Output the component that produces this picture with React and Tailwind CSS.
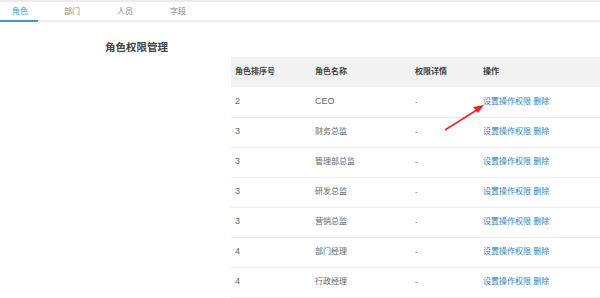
const tabs = ["角色", "部门", "人员", "字段"];

const roles = [
  { sort: 2, name: "CEO" },
  { sort: 3, name: "财务总监" },
  { sort: 3, name: "管理部总监" },
  { sort: 3, name: "研发总监" },
  { sort: 3, name: "营销总监" },
  { sort: 4, name: "部门经理" },
  { sort: 4, name: "行政经理" },
];

const App = () => {
  return (
    <div
      className="w-[600px] h-[298px] overflow-hidden bg-white text-[#555]"
      style={{ fontFamily: '"Liberation Sans", "Noto Sans CJK SC", sans-serif' }}
    >
      <div className="h-[2px] bg-[#ececec]" />

      {/* tabs */}
      <div className="flex h-[20px] border-b-2 border-[#eeeeee]">
        {tabs.map((t, i) => (
          <div
            key={t}
            className={
              i === 0
                ? "w-[38px] -mb-[2px] border-b-2 border-[#3a9ad9] text-[#3a9ad9] text-[8px] leading-[20px] pl-[12px]"
                : "w-[53px] text-[8px] leading-[20px] text-[#888] pl-[26px]"
            }
          >
            {t}
          </div>
        ))}
      </div>

      <div className="pl-[105px] pt-[15px]">
        <h1 className="text-[10.5px] font-bold text-[#444] leading-[20px]">角色权限管理</h1>
      </div>

      {/* table */}
      <div className="relative pl-[231px]">
        <table className="w-[369px] text-[8px] border-collapse">
          <thead>
            <tr className="h-[30px] bg-[#f2f2f2] text-[#3f3f3f]">
              <th className="w-[80px] text-left pl-[4px] font-bold">角色排序号</th>
              <th className="w-[100px] text-left pl-[4px] font-bold">角色名称</th>
              <th className="w-[68px] text-left pl-[4px] font-bold">权限详情</th>
              <th className="text-left pl-[4px] font-bold">操作</th>
            </tr>
          </thead>
          <tbody>
            {roles.map((r, i) => (
              <tr key={i} className="h-[30px] border-b border-[#ededed] text-[#666]">
                <td className="pl-[4px] text-[9px]">{r.sort}</td>
                <td className="pl-[4px]">
                  <span className={r.name === "CEO" ? "text-[9px]" : ""}>{r.name}</span>
                </td>
                <td className="pl-[4px]">-</td>
                <td className="pl-[4px] text-[#2f7fc1]">
                  设置操作权限 <span>删除</span>
                </td>
              </tr>
            ))}
          </tbody>
        </table>

        {/* red annotation arrow */}
        <svg
          className="absolute left-[440px] top-[40px]"
          width="50"
          height="40"
          viewBox="0 0 50 40"
        >
          <line x1="5" y1="33" x2="40" y2="11" stroke="#e8251f" strokeWidth="1.5" />
          <polygon points="44,8 33,10 38,16" fill="#e8251f" />
        </svg>
      </div>
    </div>
  );
};

export default App;
